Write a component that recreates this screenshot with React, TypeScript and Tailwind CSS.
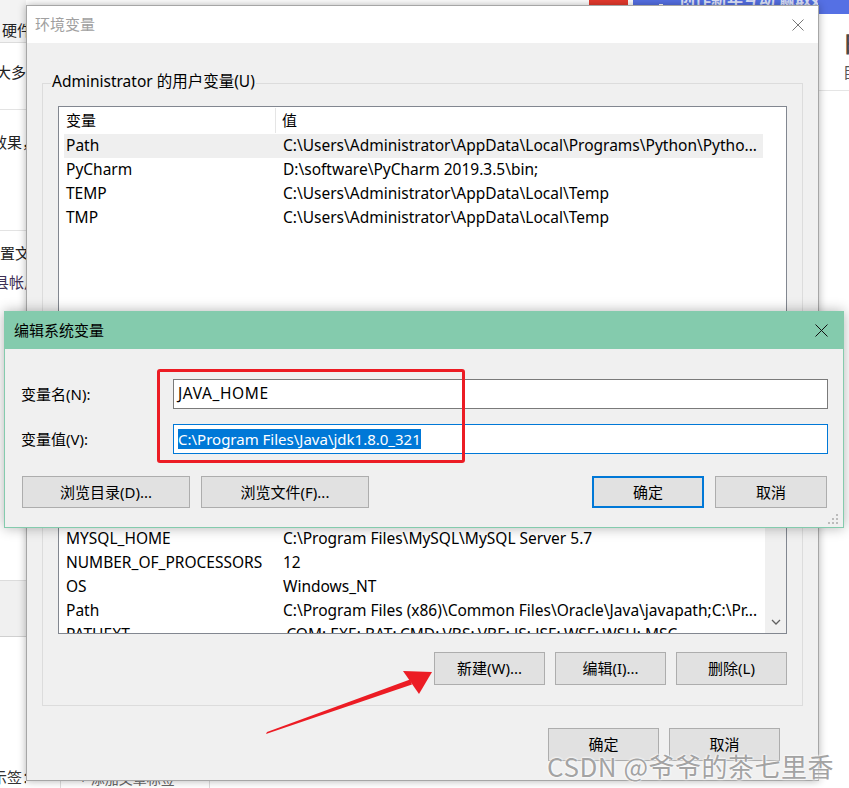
import React from 'react';

const userVars: [string, string][] = [
  ['Path', 'C:\\Users\\Administrator\\AppData\\Local\\Programs\\Python\\Pytho...'],
  ['PyCharm', 'D:\\software\\PyCharm 2019.3.5\\bin;'],
  ['TEMP', 'C:\\Users\\Administrator\\AppData\\Local\\Temp'],
  ['TMP', 'C:\\Users\\Administrator\\AppData\\Local\\Temp'],
];

const sysVars: [string, string][] = [
  ['ComSpec', 'C:\\Windows\\system32\\cmd.exe'],
  ['configsetroot', 'C:\\Windows\\ConfigSetRoot'],
  ['DriverData', 'C:\\Windows\\System32\\Drivers\\DriverData'],
  ['FPS_BROWSER_APP_PROFILE_STRING', 'Internet Explorer'],
  ['MYSQL_HOME', 'C:\\Program Files\\MySQL\\MySQL Server 5.7'],
  ['NUMBER_OF_PROCESSORS', '12'],
  ['OS', 'Windows_NT'],
  ['Path', 'C:\\Program Files (x86)\\Common Files\\Oracle\\Java\\javapath;C:\\Pr...'],
  ['PATHEXT', '.COM;.EXE;.BAT;.CMD;.VBS;.VBE;.JS;.JSE;.WSF;.WSH;.MSC'],
];

const WinButton = ({ label, primary, className = '' }: { label: string; primary?: boolean; className?: string }) => (
  <div
    className={`h-[32px] flex items-center justify-center bg-[#e1e1e1] text-[15px] text-black ${
      primary ? 'border-2 border-[#0078d7]' : 'border border-[#adadad]'
    } ${className}`}
  >
    {label}
  </div>
);

const VarList = ({
  rows,
  selected,
  scroll,
  className,
}: {
  rows: [string, string][];
  selected?: number;
  scroll?: boolean;
  className: string;
}) => (
  <div className={`border border-[#828790] bg-white flex overflow-hidden ${className}`}>
    <div className="flex-1 flex flex-col overflow-hidden">
      <div className="h-[27px] flex items-center shrink-0">
        <div className="w-[217px] h-[25px] flex items-center pl-[7px] border-r border-[#e5e5e5]">变量</div>
        <div className="pl-[6px]">值</div>
      </div>
      {rows.map(([name, value], i) => (
        <div
          key={i}
          className={`h-[24px] shrink-0 ml-[5px] flex items-center whitespace-nowrap text-[15.5px] ${
            i === selected ? 'bg-[#efefef]' : ''
          }`}
        >
          <div className="w-[212px] pl-[2px] overflow-hidden">{name}</div>
          <div className="pl-[7px]">{value}</div>
        </div>
      ))}
    </div>
    <div className="w-[23px] flex justify-end">
      {scroll && (
        <div className="w-[21px] bg-[#f0f0f0] flex flex-col justify-end items-center pb-[8px]">
          <svg width="10" height="6" viewBox="0 0 10 6">
            <path d="M1 1 L5 5 L9 1" fill="none" stroke="#606060" strokeWidth="1.3" />
          </svg>
        </div>
      )}
    </div>
  </div>
);

const CloseX = ({ color, size }: { color: string; size: number }) => (
  <svg width={size} height={size} viewBox={`0 0 ${size} ${size}`}>
    <path d={`M0.5 0.5 L${size - 0.5} ${size - 0.5} M${size - 0.5} 0.5 L0.5 ${size - 0.5}`} stroke={color} strokeWidth="1" />
  </svg>
);

const App: React.FC = () => {
  return (
    <div className="relative w-[849px] h-[788px] overflow-hidden bg-white text-black font-['Noto_Sans','Noto_Sans_CJK_SC',sans-serif] text-[15px]">
      {/* background page */}
      <div className="flex h-full">
        <div className="w-[26px] flex flex-col overflow-hidden whitespace-nowrap text-[15px] text-[#222]">
          <div className="h-[43px] shrink-0 bg-[#f3f3f3] border-b border-[#dcdcdc] pt-[20px] pl-[2px] leading-[20px]">硬件</div>
          <div className="h-[67px] shrink-0 border-b border-[#e3e3e3] pt-[19px] ml-[-4px] leading-[20px]">大多数</div>
          <div className="h-[121px] shrink-0 border-b border-[#e3e3e3] pt-[22px] ml-[-8px] leading-[20px]">效果，</div>
          <div className="h-[80px] shrink-0 pt-[12px] leading-[20px]">
            <div>置文</div>
            <div className="mt-[9px] ml-[-6px] text-[#3d2f55]">县帐户</div>
          </div>
          <div className="h-[270px] shrink-0 border-b border-[#dcdcdc]" />
          <div className="h-[56px] shrink-0 bg-[#f0f0f0] border-b border-[#d0d0d0]" />
          <div className="flex-1 flex flex-col justify-end pb-[1px]">
            <div className="ml-[-8px] leading-[20px] text-[#333]">示签：</div>
          </div>
        </div>
        <div className="flex-1 flex flex-col">
          <div className="h-[14px] flex justify-end">
            <div className="w-[39px] bg-[#e63a2e] flex items-end justify-center gap-[3px] pb-[2px]">
              <div className="w-[6px] h-[6px] rounded-full bg-[#f7b733]" />
              <div className="w-[6px] h-[6px] rounded-full bg-[#f7b733]" />
            </div>
            <div className="w-[5px]" />
            <div className="w-[185px] bg-[#5570e4] overflow-hidden text-[#dfe4fb] text-[16px] leading-[16px] whitespace-nowrap pl-[26px] flex items-start gap-[16px]">
              <div className="w-[10px] h-[5px] mt-[4px] border-x-2 border-b-2 border-white" />
              <div className="mt-[-9px] font-bold">创作新年互动 赢取好礼</div>
            </div>
          </div>
          <div className="flex-1" />
          <div className="ml-[34px] w-[150px] h-[18px] border-l border-r border-[#dddddd] text-[#666] text-[14px] leading-[18px] pl-[18px] whitespace-nowrap overflow-hidden">
            + 添加文章标签
          </div>
        </div>
        <div className="w-[31px] flex flex-col overflow-hidden whitespace-nowrap">
          <div className="h-[14px] bg-[#5570e4]" />
          <div className="h-[77px] border-b border-[#e5e5e5] pl-[25px] flex flex-col">
            <div className="mt-[17px] text-[22px] leading-[24px] font-bold text-[#4a4a4a]">日</div>
            <div className="mt-[9px] text-[15px] leading-[16px] text-[#555]">目</div>
          </div>
        </div>
      </div>

      {/* 环境变量 window */}
      <div className="absolute left-[26px] top-[5px] w-[793px] h-[776px] border border-[#a6a6a6] bg-[#f0f0f0] flex flex-col shadow-[0_0_8px_rgba(0,0,0,0.3)]">
        <div className="h-[37px] shrink-0 bg-white flex items-center justify-between pl-[8px] pr-[14px]">
          <span className="text-[#a0a0a0]">环境变量</span>
          <CloseX color="#777777" size={12} />
        </div>
        <div className="flex-1 flex flex-col px-[15px]">
          <div className="relative mt-[40px] h-[288px] border border-[#dcdcdc] pt-[22px] px-[15px]">
            <div className="absolute left-[8px] top-[-14px] px-[1px] bg-[#f0f0f0] leading-[22px] text-[15.5px]">Administrator 的用户变量(U)</div>
            <VarList rows={userVars} selected={0} className="h-[230px]" />
          </div>
          <div className="relative mt-[9px] border border-[#dcdcdc] pt-[22px] px-[15px] pb-[20px]">
            <div className="absolute left-[8px] top-[-14px] px-[1px] bg-[#f0f0f0] leading-[22px]">系统变量(S)</div>
            <VarList rows={sysVars} scroll className="h-[231px]" />
            <div className="mt-[18px] flex justify-end gap-[10px]">
              <WinButton label="新建(W)..." className="w-[111px] h-[33px]" />
              <WinButton label="编辑(I)..." className="w-[111px] h-[33px]" />
              <WinButton label="删除(L)" className="w-[111px] h-[33px]" />
            </div>
          </div>
          <div className="mt-[22px] flex justify-end gap-[10px] pr-[23px]">
            <WinButton label="确定" className="w-[111px] h-[33px]" />
            <WinButton label="取消" className="w-[111px] h-[33px]" />
          </div>
        </div>
      </div>

      {/* 编辑系统变量 dialog */}
      <div className="absolute left-[4px] top-[311px] w-[840px] h-[217px] border border-[#84cbad] bg-[#f0f0f0] flex flex-col shadow-[0_0_12px_rgba(0,0,0,0.3)]">
        <div className="h-[37px] shrink-0 bg-[#84cbad] flex items-center justify-between pl-[9px] pr-[15px]">
          <span>编辑系统变量</span>
          <CloseX color="#111111" size={13} />
        </div>
        <div className="flex-1 flex flex-col pt-[30px] pl-[16px] pr-[15px]">
          <div className="flex items-center">
            <div className="w-[152px]">变量名(N):</div>
            <div className="flex-1 h-[30px] border border-[#7a7a7a] bg-white flex items-center pl-[4px] text-[15.5px] tracking-[0.6px]">JAVA_HOME</div>
          </div>
          <div className="mt-[15px] flex items-center">
            <div className="w-[152px]">变量值(V):</div>
            <div className="flex-1 h-[30px] border border-[#0078d7] bg-white flex items-center pl-[4px]">
              <span className="bg-[#0078d7] text-white leading-[20px]">C:\Program Files\Java\jdk1.8.0_321</span>
            </div>
          </div>
          <div className="mt-[22px] flex items-center">
            <WinButton label="浏览目录(D)..." className="ml-[1px] w-[168px]" />
            <WinButton label="浏览文件(F)..." className="ml-[11px] w-[168px]" />
            <div className="flex-1" />
            <WinButton label="确定" primary className="w-[112px]" />
            <WinButton label="取消" className="ml-[11px] mr-[1px] w-[112px]" />
          </div>
        </div>
        <svg className="absolute right-[4px] bottom-[2px]" width="11" height="11" viewBox="0 0 11 11">
          <rect x="8" y="0" width="2" height="2" fill="#bcbcbc" />
          <rect x="4" y="4" width="2" height="2" fill="#bcbcbc" />
          <rect x="8" y="4" width="2" height="2" fill="#bcbcbc" />
          <rect x="0" y="8" width="2" height="2" fill="#bcbcbc" />
          <rect x="4" y="8" width="2" height="2" fill="#bcbcbc" />
          <rect x="8" y="8" width="2" height="2" fill="#bcbcbc" />
        </svg>
      </div>

      {/* red highlight box */}
      <div className="absolute left-[157px] top-[369px] w-[308px] h-[94px] border-[3px] border-[#ec1c24] rounded-[3px]" />

      {/* red arrow */}
      <svg className="absolute left-0 top-0 pointer-events-none" width="849" height="788" viewBox="0 0 849 788">
        <polygon points="266,734 267,732 410,679.5 412,684.5" fill="#ec1c24" />
        <polygon points="432,672 403,671 419,694" fill="#ec1c24" />
      </svg>

      {/* watermark */}
      <div className="absolute left-[547px] top-[752px] text-[26px] leading-[28px] tracking-[0.5px] whitespace-nowrap text-[#a3a3a3] font-['Noto_Sans_CJK_SC',sans-serif] [text-shadow:0_0_1px_#fff,0_0_2px_#fff,0_0_3px_#fff]">
        CSDN @爷爷的茶七里香
      </div>
    </div>
  );
};

export default App;
